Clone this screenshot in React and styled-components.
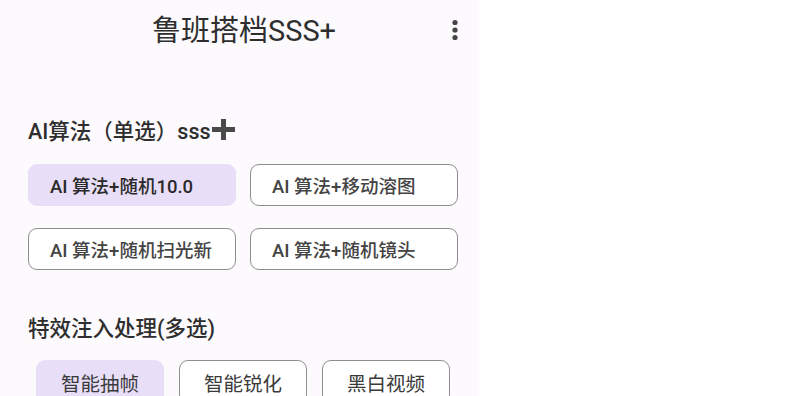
import React, { useState } from "react"
import styled, { createGlobalStyle } from "styled-components"

const GlobalStyle = createGlobalStyle`
  html, body {
    margin: 0;
    padding: 0;
    background: #ffffff;
  }
  body {
    font-family: Roboto, "Noto Sans CJK SC", sans-serif;
  }
`

const algorithmOptions = [
  "AI 算法+随机10.0",
  "AI 算法+移动溶图",
  "AI 算法+随机扫光新",
  "AI 算法+随机镜头",
]

const effectOptions = ["智能抽帧", "智能锐化", "黑白视频"]

const PlusIcon = () => (
  <svg width="23" height="21" viewBox="0 0 23 21">
    <rect x="9" y="0" width="5" height="21" fill="#4a4a4a" />
    <rect x="0" y="8" width="23" height="5" fill="#4a4a4a" />
  </svg>
)

const MoreIcon = () => (
  <svg width="8" height="24" viewBox="0 0 8 24">
    <circle cx="4" cy="4.5" r="2.6" fill="#444" />
    <circle cx="4" cy="12" r="2.6" fill="#444" />
    <circle cx="4" cy="19.5" r="2.6" fill="#444" />
  </svg>
)

const App = () => {
  const [algorithm, setAlgorithm] = useState(0)
  const [effects, setEffects] = useState([0])

  const toggleEffect = i =>
    setEffects(prev =>
      prev.includes(i) ? prev.filter(x => x !== i) : [...prev, i]
    )

  return (
    <Page>
      <GlobalStyle />
      <Panel>
        <Header>
          <Title>鲁班搭档SSS+</Title>
          <MenuButton aria-label="more">
            <MoreIcon />
          </MenuButton>
        </Header>

        <SectionTitle $top={53}>
          AI算法（单选）sss
          <PlusIcon />
        </SectionTitle>
        <AlgorithmGrid>
          {algorithmOptions.map((label, i) => (
            <Chip
              key={label}
              $selected={algorithm === i}
              onClick={() => setAlgorithm(i)}
            >
              {label}
            </Chip>
          ))}
        </AlgorithmGrid>

        <SectionTitle $top={42}>特效注入处理(多选)</SectionTitle>
        <EffectRow>
          {effectOptions.map((label, i) => (
            <EffectChip
              key={label}
              $selected={effects.includes(i)}
              onClick={() => toggleEffect(i)}
            >
              {label}
            </EffectChip>
          ))}
        </EffectRow>
      </Panel>
    </Page>
  )
}

const Page = styled.div`
  display: flex;
  width: 800px;
  height: 396px;
  overflow: hidden;
  background: #ffffff;
`

const Panel = styled.div`
  display: flex;
  flex-direction: column;
  width: 478px;
  flex-shrink: 0;
  box-sizing: border-box;
  padding: 0 20px 0 28px;
  background: #fcfafd;
`

const Header = styled.div`
  position: relative;
  display: flex;
  flex-shrink: 0;
  align-items: center;
  justify-content: center;
  height: 62px;
  padding-left: 2px;
`

const Title = styled.h1`
  margin: 0;
  font-size: 29px;
  font-weight: 400;
  line-height: 36px;
  color: #2e2e2e;
`

const MenuButton = styled.button`
  position: absolute;
  right: -1px;
  top: 18px;
  display: flex;
  padding: 0;
  border: none;
  background: none;
  cursor: pointer;
`

const SectionTitle = styled.h2`
  display: flex;
  flex-shrink: 0;
  align-items: center;
  gap: 1px;
  margin: ${p => p.$top}px 0 0 0;
  height: 28px;
  font-size: 21.5px;
  font-weight: 500;
  color: #2e2e2e;
`

const AlgorithmGrid = styled.div`
  display: grid;
  flex-shrink: 0;
  grid-template-columns: 208px 208px;
  column-gap: 14px;
  row-gap: 22px;
  margin-top: 21px;
`

const Chip = styled.button`
  display: flex;
  align-items: center;
  box-sizing: border-box;
  height: 42px;
  padding: 0 0 0 21px;
  border: 1.5px solid ${p => (p.$selected ? "transparent" : "#8e8e8e")};
  border-radius: 9px;
  background: ${p => (p.$selected ? "#e8def8" : "#ffffff")};
  font-family: inherit;
  font-size: 18.5px;
  font-weight: 500;
  color: ${p => (p.$selected ? "#2a2a2a" : "#444444")};
  cursor: pointer;
`

const EffectRow = styled.div`
  display: flex;
  flex-shrink: 0;
  gap: 15px;
  margin: 20px 0 0 8px;
`

const EffectChip = styled(Chip)`
  justify-content: center;
  width: 128px;
  height: 44px;
  padding: 0;
  font-size: 19.5px;
  font-weight: 400;
  color: #3a3a3a;
`

export default App
